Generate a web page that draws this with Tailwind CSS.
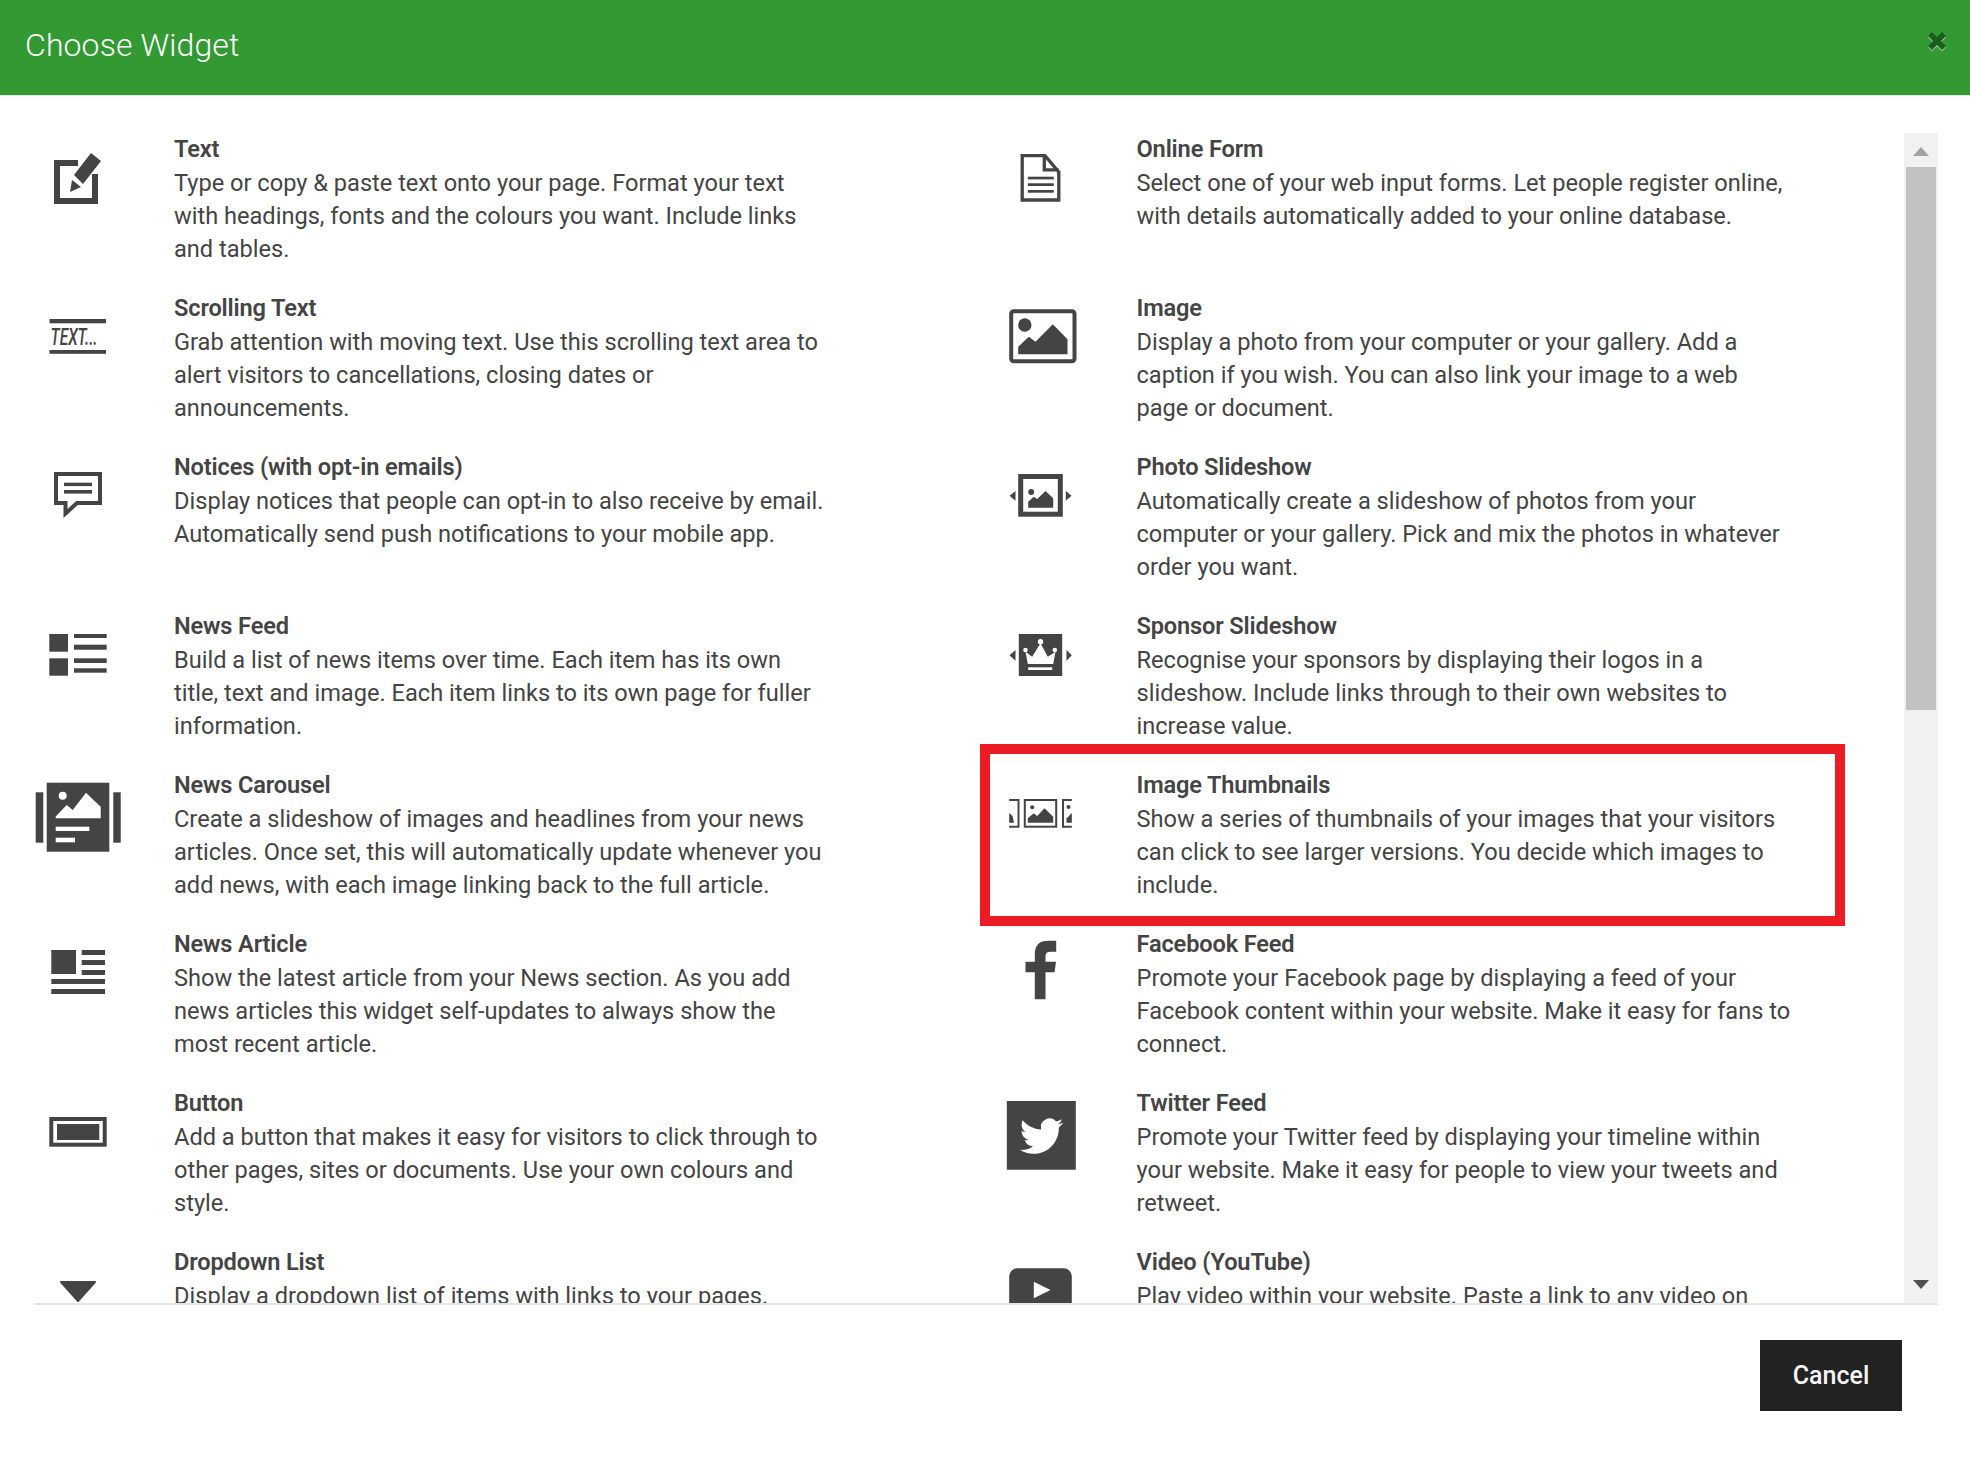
<!DOCTYPE html>
<html lang="en">
<head>
<meta charset="utf-8">
<title>Choose Widget</title>
<script src="https://cdn.jsdelivr.net/npm/@tailwindcss/browser@4"></script>
</head>
<body class="w-[1970px] h-[1472px] bg-white font-[Roboto,sans-serif] text-[#444] overflow-hidden">
<header class="h-[96px] bg-[#339933] border-b border-b-[#e5e5e5] flex items-center justify-between pl-[25px] pr-[23px]">
  <h1 class="text-[32px] font-light text-white leading-[90px] tracking-[0.1px] -mt-[6px]">Choose Widget</h1>
  <svg class="w-[20px] h-[22px] -mt-[14px]" viewBox="1927 28 20 22" aria-label="Close">
    <path d="M1930 32 L1944 46 M1944 32 L1930 46" stroke="#8cc48c" stroke-width="5.5" transform="translate(0 1.5)"/>
    <path d="M1930 32 L1944 46 M1944 32 L1930 46" stroke="#1c5c1c" stroke-width="5.5"/>
  </svg>
</header>
<main class="relative ml-[34px] mt-[37px] w-[1904px] h-[1172px] border-b-2 border-b-[#e5e5e5] flex">
  <div class="w-[1870px] h-[1170px] overflow-hidden grid grid-cols-[962.5px_1fr] text-[23.6px] leading-[33px]">
    <div>
      <div class="flex h-[159px]">
        <svg class="w-[88px] h-[120px] shrink-0 ml-0" viewBox="34 133 88 120" fill="#444">
          <path d="M78 163 H57 V201 H95 V174" fill="none" stroke="#444" stroke-width="6"/>
          <path d="M91 153 L101 161 L83 184 L74 175 Z"/>
          <path d="M70 192 L72 180 L81 187 Z"/>
        </svg>
        <div class="ml-[52px]"><h2 class="font-semibold tracking-[-0.15px]">Text</h2><p class="pt-px -mb-px">Type or copy &amp; paste text onto your page. Format your text<br>with headings, fonts and the colours you want. Include links<br>and tables.</p></div>
      </div>
      <div class="flex h-[159px]">
        <svg class="w-[88px] h-[120px] shrink-0" viewBox="34 292 88 120" fill="#444">
          <rect x="49.5" y="319" width="56.5" height="4.3"/>
          <rect x="49.5" y="350" width="56.5" height="3.8"/>
          <text x="50.5" y="345" font-family="Roboto" font-style="italic" font-weight="500" font-size="24" letter-spacing="0" textLength="47" lengthAdjust="spacingAndGlyphs">TEXT...</text>
        </svg>
        <div class="ml-[52px]"><h2 class="font-semibold tracking-[-0.15px]">Scrolling Text</h2><p class="pt-px -mb-px">Grab attention with moving text. Use this scrolling text area to<br>alert visitors to cancellations, closing dates or<br>announcements.</p></div>
      </div>
      <div class="flex h-[159px]">
        <svg class="w-[88px] h-[120px] shrink-0" viewBox="34 451 88 120" fill="#444">
          <path d="M56 474 H100 V503 H77 L65.5 513.5 V503 H56 Z" fill="none" stroke="#444" stroke-width="4"/>
          <rect x="64" y="482.7" width="28" height="3.4"/>
          <rect x="64" y="490" width="28" height="3.6"/>
        </svg>
        <div class="ml-[52px]"><h2 class="font-semibold tracking-[-0.15px]">Notices (with opt-in emails)</h2><p class="pt-px -mb-px">Display notices that people can opt-in to also receive by email.<br>Automatically send push notifications to your mobile app.</p></div>
      </div>
      <div class="flex h-[159px]">
        <svg class="w-[88px] h-[120px] shrink-0" viewBox="34 610 88 120" fill="#444">
          <rect x="49.3" y="634" width="18.7" height="17.7"/>
          <rect x="49.3" y="658.3" width="18.7" height="17.4"/>
          <rect x="74" y="634" width="32.7" height="4"/>
          <rect x="74" y="644.7" width="32.7" height="5"/>
          <rect x="74" y="658.3" width="32.7" height="4.7"/>
          <rect x="74" y="668.3" width="32.7" height="4.4"/>
        </svg>
        <div class="ml-[52px]"><h2 class="font-semibold tracking-[-0.15px]">News Feed</h2><p class="pt-px -mb-px">Build a list of news items over time. Each item has its own<br>title, text and image. Each item links to its own page for fuller<br>information.</p></div>
      </div>
      <div class="flex h-[159px]">
        <svg class="w-[88px] h-[120px] shrink-0" viewBox="34 769 88 120" fill="#444">
          <rect x="46.7" y="782.7" width="62.6" height="69"/>
          <rect x="35.7" y="792.3" width="7.6" height="50.4"/>
          <rect x="113.3" y="792.3" width="7.4" height="50.4"/>
          <circle cx="62.7" cy="795.7" r="4" fill="#fff"/>
          <path d="M55.7 818.3 V816.5 L66.7 805 L72.7 810 L86 792.7 L100.7 806.7 V818.3 Z" fill="#fff"/>
          <rect x="55.7" y="826.7" width="33.6" height="4.3" fill="#fff"/>
          <rect x="55.7" y="837.7" width="19.3" height="4.6" fill="#fff"/>
        </svg>
        <div class="ml-[52px]"><h2 class="font-semibold tracking-[-0.15px]">News Carousel</h2><p class="pt-px -mb-px">Create a slideshow of images and headlines from your news<br>articles. Once set, this will automatically update whenever you<br>add news, with each image linking back to the full article.</p></div>
      </div>
      <div class="flex h-[159px]">
        <svg class="w-[88px] h-[120px] shrink-0" viewBox="34 928 88 120" fill="#444">
          <rect x="51.3" y="950" width="24.7" height="24"/>
          <rect x="81.7" y="950" width="23.3" height="5"/>
          <rect x="81.7" y="960" width="23.3" height="5"/>
          <rect x="81.7" y="970" width="23.3" height="5"/>
          <rect x="51.3" y="979" width="53.7" height="5"/>
          <rect x="51.3" y="989" width="53.7" height="5"/>
        </svg>
        <div class="ml-[52px]"><h2 class="font-semibold tracking-[-0.15px]">News Article</h2><p class="pt-px -mb-px">Show the latest article from your News section. As you add<br>news articles this widget self-updates to always show the<br>most recent article.</p></div>
      </div>
      <div class="flex h-[159px]">
        <svg class="w-[88px] h-[120px] shrink-0" viewBox="34 1087 88 120" fill="#444">
          <rect x="51.3" y="1119" width="53.4" height="25.7" fill="none" stroke="#444" stroke-width="4"/>
          <rect x="57" y="1124" width="42.3" height="16"/>
        </svg>
        <div class="ml-[52px]"><h2 class="font-semibold tracking-[-0.15px]">Button</h2><p class="pt-px -mb-px">Add a button that makes it easy for visitors to click through to<br>other pages, sites or documents. Use your own colours and<br>style.</p></div>
      </div>
      <div class="flex h-[159px]">
        <svg class="w-[88px] h-[120px] shrink-0" viewBox="34 1246 88 120" fill="#444">
          <path d="M61 1282 H95 L78 1301 Z" stroke="#444" stroke-width="2" stroke-linejoin="round"/>
        </svg>
        <div class="ml-[52px]"><h2 class="font-semibold tracking-[-0.15px]">Dropdown List</h2><p class="pt-px -mb-px">Display a dropdown list of items with links to your pages.</p></div>
      </div>
    </div>
    <div>
      <div class="flex h-[159px]">
        <svg class="w-[88px] h-[120px] shrink-0" viewBox="996.5 133 88 120" fill="#444">
          <path d="M1021.7 155.7 H1044.5 L1058.3 172 V200 H1021.7 Z M1043.8 155.7 V169.8 H1058.3" fill="none" stroke="#444" stroke-width="3.3"/>
          <rect x="1027.3" y="176.7" width="26" height="2.7"/>
          <rect x="1027.3" y="183.3" width="26" height="2.7"/>
          <rect x="1027.3" y="190" width="26" height="2.7"/>
        </svg>
        <div class="ml-[52px]"><h2 class="font-semibold tracking-[-0.15px]">Online Form</h2><p class="pt-px -mb-px">Select one of your web input forms. Let people register online,<br>with details automatically added to your online database.</p></div>
      </div>
      <div class="flex h-[159px]">
        <svg class="w-[88px] h-[120px] shrink-0" viewBox="996.5 292 88 120" fill="#444">
          <rect x="1010.7" y="311.3" width="63.3" height="50" rx="2.5" fill="none" stroke="#444" stroke-width="4"/>
          <circle cx="1024.3" cy="325" r="6.7"/>
          <path d="M1017.7 346.7 L1028.3 336.7 L1035 341.7 L1052.3 324.3 L1067 339.3 V354.3 H1017.7 Z"/>
        </svg>
        <div class="ml-[52px]"><h2 class="font-semibold tracking-[-0.15px]">Image</h2><p class="pt-px -mb-px">Display a photo from your computer or your gallery. Add a<br>caption if you wish. You can also link your image to a web<br>page or document.</p></div>
      </div>
      <div class="flex h-[159px]">
        <svg class="w-[88px] h-[120px] shrink-0" viewBox="996.5 451 88 120" fill="#444">
          <rect x="1020.2" y="476.5" width="39.6" height="37.7" fill="none" stroke="#444" stroke-width="5"/>
          <circle cx="1030.7" cy="492" r="3"/>
          <path d="M1027.7 507.7 V501.7 L1033.3 496.7 L1036.7 499 L1045 491 L1052.7 498.3 V507.7 Z"/>
          <path d="M1015 491 L1009 495.8 L1015 500.7 Z"/>
          <path d="M1065.3 491 L1071 495.8 L1065.3 500.7 Z"/>
        </svg>
        <div class="ml-[52px]"><h2 class="font-semibold tracking-[-0.15px]">Photo Slideshow</h2><p class="pt-px -mb-px">Automatically create a slideshow of photos from your<br>computer or your gallery. Pick and mix the photos in whatever<br>order you want.</p></div>
      </div>
      <div class="flex h-[159px]">
        <svg class="w-[88px] h-[120px] shrink-0" viewBox="996.5 610 88 120" fill="#444">
          <rect x="1018.3" y="634" width="43.4" height="42"/>
          <path d="M1025 651.7 L1031.7 656.7 L1040 643.3 L1047.3 656.7 L1055 651.7 L1052.7 664 H1027.3 Z" fill="#fff"/>
          <circle cx="1025" cy="650" r="2.3" fill="#fff"/>
          <circle cx="1040" cy="641.7" r="2.7" fill="#fff"/>
          <circle cx="1054.3" cy="650" r="2.3" fill="#fff"/>
          <rect x="1027.7" y="667.3" width="24" height="2.7" fill="#fff"/>
          <path d="M1015 650 L1009 655.3 L1015 660.7 Z"/>
          <path d="M1066 650 L1071.3 655.3 L1066 660.7 Z"/>
        </svg>
        <div class="ml-[52px]"><h2 class="font-semibold tracking-[-0.15px]">Sponsor Slideshow</h2><p class="pt-px -mb-px">Recognise your sponsors by displaying their logos in a<br>slideshow. Include links through to their own websites to<br>increase value.</p></div>
      </div>
      <div class="flex h-[159px]">
        <svg class="w-[88px] h-[120px] shrink-0" viewBox="996.5 769 88 120" fill="#444">
          <rect x="1024.3" y="800" width="31.4" height="26.7" fill="none" stroke="#444" stroke-width="2"/>
          <circle cx="1031.7" cy="807.3" r="2"/>
          <path d="M1027.3 822.7 V818.3 L1033.3 813.3 L1036.7 816 L1044 808.3 L1052.7 816.7 V822.7 Z"/>
          <path d="M1008.7 800 H1018 V826.7 H1008.7" fill="none" stroke="#444" stroke-width="2"/>
          <path d="M1008.7 813 L1012 816 L1013.5 822.7 H1008.7 Z"/>
          <path d="M1071.3 800 H1062.5 V826.7 H1071.3" fill="none" stroke="#444" stroke-width="2"/>
          <circle cx="1068" cy="807" r="2"/>
          <path d="M1066 822.7 V818.5 L1071.3 813 V822.7 Z"/>
        </svg>
        <div class="ml-[52px]"><h2 class="font-semibold tracking-[-0.15px]">Image Thumbnails</h2><p class="pt-px -mb-px">Show a series of thumbnails of your images that your visitors<br>can click to see larger versions. You decide which images to<br>include.</p></div>
      </div>
      <div class="flex h-[159px]">
        <svg class="w-[88px] h-[120px] shrink-0" viewBox="996.5 928 88 120" fill="#444">
          <path d="M1045 999.3 H1034.3 V972.3 H1025 V961.7 H1034.3 V954 Q1034.3 940.7 1048 940.7 H1055.7 V951.7 H1050 Q1045 951.7 1045 956 V961.7 H1055.5 L1054 972.3 H1045 Z"/>
        </svg>
        <div class="ml-[52px]"><h2 class="font-semibold tracking-[-0.15px]">Facebook Feed</h2><p class="pt-px -mb-px">Promote your Facebook page by displaying a feed of your<br>Facebook content within your website. Make it easy for fans to<br>connect.</p></div>
      </div>
      <div class="flex h-[159px]">
        <svg class="w-[88px] h-[120px] shrink-0" viewBox="996.5 1087 88 120" fill="#444">
          <rect x="1006.3" y="1101" width="69" height="68.7"/>
          <path transform="translate(1019.3 1114.5) scale(1.81)" fill="#fff" d="M23.953 4.57a10 10 0 01-2.825.775 4.958 4.958 0 002.163-2.723c-.951.555-2.005.959-3.127 1.184a4.92 4.92 0 00-8.384 4.482C7.69 8.095 4.067 6.13 1.64 3.162a4.822 4.822 0 00-.666 2.475c0 1.71.87 3.213 2.188 4.096a4.904 4.904 0 01-2.228-.616v.06a4.923 4.923 0 003.946 4.827 4.996 4.996 0 01-2.212.085 4.936 4.936 0 004.604 3.417 9.867 9.867 0 01-6.102 2.105c-.39 0-.779-.023-1.17-.067a13.995 13.995 0 007.557 2.209c9.053 0 13.998-7.496 13.998-13.985 0-.21 0-.42-.015-.63A9.935 9.935 0 0024 4.59z"/>
        </svg>
        <div class="ml-[52px]"><h2 class="font-semibold tracking-[-0.15px]">Twitter Feed</h2><p class="pt-px -mb-px">Promote your Twitter feed by displaying your timeline within<br>your website. Make it easy for people to view your tweets and<br>retweet.</p></div>
      </div>
      <div class="flex h-[159px]">
        <svg class="w-[88px] h-[120px] shrink-0" viewBox="996.5 1246 88 120" fill="#444">
          <rect x="1008.7" y="1268.3" width="62.6" height="44" rx="8"/>
          <path d="M1033.3 1281.7 L1050 1290 L1033.3 1298.3 Z" fill="#fff"/>
        </svg>
        <div class="ml-[52px]"><h2 class="font-semibold tracking-[-0.15px]">Video (YouTube)</h2><p class="pt-px -mb-px">Play video within your website. Paste a link to any video on</p></div>
      </div>
    </div>
  </div>
  <div class="w-[34px] h-[1170px] bg-[#f1f1f1] flex flex-col items-center">
    <svg class="w-[16px] h-[9px] mt-[14px] mb-[11px] shrink-0" viewBox="0 0 16 9"><path d="M8 0 L16 9 H0 Z" fill="#a3a3a3"/></svg>
    <div class="w-[30px] h-[543px] bg-[#c1c1c1] shrink-0"></div>
    <svg class="w-[16px] h-[9px] mt-auto mb-[14px] shrink-0" viewBox="0 0 16 9"><path d="M0 0 H16 L8 9 Z" fill="#505050"/></svg>
  </div>
  <div class="absolute left-[946px] top-[611px] w-[865px] h-[182px] border-[10px] border-[#ed1c24]"></div>
</main>
<footer class="flex justify-end pr-[68px] pt-[35px]">
  <button class="w-[142px] h-[71px] bg-[#222] text-[#f5f5f5] text-[25px] font-medium">Cancel</button>
</footer>
</body>
</html>
